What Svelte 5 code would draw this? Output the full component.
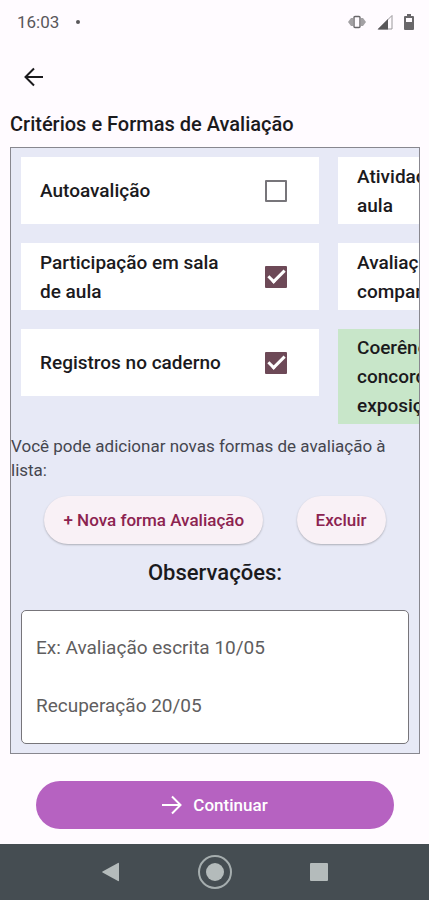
<script lang="ts">
  let criteria = $state([
    { label: 'Autoavalição', checked: false, custom: false },
    { label: 'Participação em sala\nde aula', checked: true, custom: false },
    { label: 'Registros no caderno', checked: true, custom: false },
    { label: 'Atividades em sala de\naula', checked: false, custom: false },
    { label: 'Avaliação\ncomparativa', checked: false, custom: false },
    { label: 'Coerência e\nconcordância na\nexposição', checked: false, custom: true }
  ]);

  let notes = $state('');
  const hint = 'Ex: Avaliação escrita 10/05\n\nRecuperação 20/05';
</script>

<div class="screen">
  <div class="status">
    <span>16:03</span>
    <span class="dot"></span>
    <div class="status-icons">
      <svg width="18" height="14" viewBox="0 0 18 14">
        <path d="M0 7l3-4v8zM18 7l-3-4v8z" fill="#a3a1a4" />
        <path d="M4 3v8M14 3v8" stroke="#a3a1a4" stroke-width="2" />
        <rect x="6" y="1.5" width="6" height="11" rx="1" fill="#fffbff" stroke="#69676a" stroke-width="1.4" />
      </svg>
      <svg width="16" height="16" viewBox="0 0 16 16">
        <path d="M15 1.500v13.500H1.500z" fill="#fffbff" stroke="#9a989b" />
        <path d="M11 5v10.500H.5z" fill="#59575a" />
      </svg>
      <svg width="10" height="16" viewBox="0 0 10 16">
        <path d="M3 0h4v2h2q1 0 1 1v12q0 1-1 1H1q-1 0-1-1V3q0-1 1-1h2z" fill="#69676a" />
        <path d="M2 4h6v4H2z" fill="#fffbff" />
      </svg>
    </div>
  </div>

  <header>
    <button class="back" aria-label="Voltar">
      <svg width="20" height="20" viewBox="0 0 20 20">
        <path d="M19 10H2M10 1.500L1.500 10l8.500 8.500" />
      </svg>
    </button>
  </header>

  <main>
    <h1>Critérios e Formas de Avaliação</h1>

    <section class="panel">
      <div class="criteria">
        {#each criteria as item}
          <label class="card" class:custom={item.custom}>
            <span>{item.label}</span>
            <input type="checkbox" bind:checked={item.checked} />
          </label>
        {/each}
      </div>

      <p>Você pode adicionar novas formas de avaliação à lista:</p>

      <div class="actions">
        <button>+ Nova forma Avaliação</button>
        <button>Excluir</button>
      </div>

      <label class="notes-title" for="notes">Observações:</label>
      <textarea id="notes" placeholder={hint} bind:value={notes}></textarea>
    </section>

    <button class="continue">
      <svg width="20" height="20" viewBox="0 0 20 20">
        <path d="M0 10h18M10 1.500L18.500 10l-8.500 8.500" />
      </svg>
      Continuar
    </button>
  </main>

  <nav>
    <button aria-label="Voltar">
      <svg width="20" height="20" viewBox="0 0 20 20"><path d="M18 1.500v17q0 1-1 .500L1.500 10.500q-.800-.500 0-1L17 1q1-.500 1 .500z" fill="#b4bbbb" /></svg>
    </button>
    <button aria-label="Início">
      <svg width="36" height="36" viewBox="0 0 36 36">
        <circle cx="18" cy="18" r="16" fill="none" stroke="#a5adae" stroke-width="2" />
        <circle cx="18" cy="18" r="9" fill="#b4bbbb" />
      </svg>
    </button>
    <button aria-label="Recentes">
      <svg width="20" height="20" viewBox="0 0 20 20"><rect x="1" y="1" width="18" height="18" rx="1" fill="#b4bbbb" /></svg>
    </button>
  </nav>
</div>

<style>
  :global(body) {
    margin: 0;
    background: #fffbff;
  }

  .screen {
    display: flex;
    flex-direction: column;
    min-height: 100vh;
    font-family: Roboto, 'Liberation Sans', sans-serif;
    color: #1b1a1d;
  }

  button {
    display: flex;
    align-items: center;
    justify-content: center;
    padding: 0;
    border: 0;
    background: none;
    font: inherit;
  }

  .status {
    display: flex;
    align-items: center;
    height: 44px;
    padding: 0 15px 0 17px;
    font-size: 17px;
    color: #59575a;
  }

  .dot {
    width: 4px;
    height: 4px;
    margin-left: 17px;
    border-radius: 50%;
    background: #59575a;
  }

  .status-icons {
    display: flex;
    align-items: center;
    gap: 11px;
    margin-left: auto;
  }

  header {
    display: flex;
    align-items: center;
    height: 66px;
    padding: 0 10px;
  }

  .back {
    width: 48px;
    height: 48px;
  }

  .back path,
  .continue path {
    fill: none;
    stroke: #1b1a1d;
    stroke-width: 2;
  }

  main {
    display: flex;
    flex: 1;
    flex-direction: column;
    padding: 0 9px 15px 10px;
  }

  h1 {
    margin: 0 0 9px;
    font-size: 20px;
    font-weight: 500;
    line-height: 28px;
  }

  .panel {
    border: 1px solid #88878f;
    background: #e7e9f6;
  }

  /* Cards run down three rows, then continue off to the right */
  .criteria {
    display: grid;
    grid-template-rows: repeat(3, auto);
    grid-auto-flow: column;
    grid-auto-columns: 298px;
    align-items: start;
    gap: 19px;
    padding: 9px 10px 10px;
    overflow-x: auto;
    scrollbar-width: none;
  }

  .card {
    display: flex;
    align-items: center;
    justify-content: space-between;
    box-sizing: border-box;
    min-height: 67px;
    padding: 4px 32px 4px 19px;
    background: #fff;
    font-size: 19px;
    font-weight: 500;
    line-height: 29px;
    white-space: pre-line;
  }

  .custom {
    background: #c8e6c9;
  }

  .card input {
    display: grid;
    place-items: center;
    flex: none;
    appearance: none;
    width: 22px;
    height: 22px;
    margin: 0;
    border: 2px solid #77757a;
    border-radius: 1px;
  }

  .card input:checked {
    border-color: #6d4957;
    background: #6d4957;
  }

  .card input:checked::after {
    content: '';
    box-sizing: border-box;
    width: 17px;
    height: 9px;
    margin-bottom: 5px;
    border: solid #fff;
    border-width: 0 0 3px 3px;
    transform: rotate(-45deg);
  }

  p {
    margin: 0;
    font-size: 17px;
    line-height: 24px;
    color: #45464f;
  }

  .actions {
    display: flex;
    justify-content: space-evenly;
    margin: 14px 0;
  }

  .actions button {
    height: 48px;
    padding: 0 19px;
    border-radius: 24px;
    background: #f9f1f6;
    box-shadow: 0 1px 2px #00000040;
    font-size: 17px;
    font-weight: 500;
    color: #8c2350;
  }

  .notes-title {
    display: block;
    margin-bottom: 22px;
    font-size: 22px;
    font-weight: 500;
    line-height: 30px;
    text-align: center;
  }

  textarea {
    display: block;
    box-sizing: border-box;
    width: calc(100% - 20px);
    height: 134px;
    margin: 0 10px 9px;
    padding: 22px 14px;
    border: 1px solid #77757a;
    border-radius: 5px;
    background: #fff;
    font: 400 19px/29px Roboto, 'Liberation Sans', sans-serif;
    color: #1b1a1d;
    resize: none;
  }

  textarea::placeholder {
    color: #5f5e60;
  }

  .continue {
    gap: 11px;
    height: 48px;
    margin: auto 26px 0;
    border-radius: 24px;
    background: #b662c1;
    font-size: 17px;
    font-weight: 500;
    color: #fff;
  }

  .continue path {
    stroke: #fff;
  }

  nav {
    display: flex;
    align-items: center;
    justify-content: center;
    gap: 76px;
    height: 56px;
    background: #454d52;
  }
</style>
